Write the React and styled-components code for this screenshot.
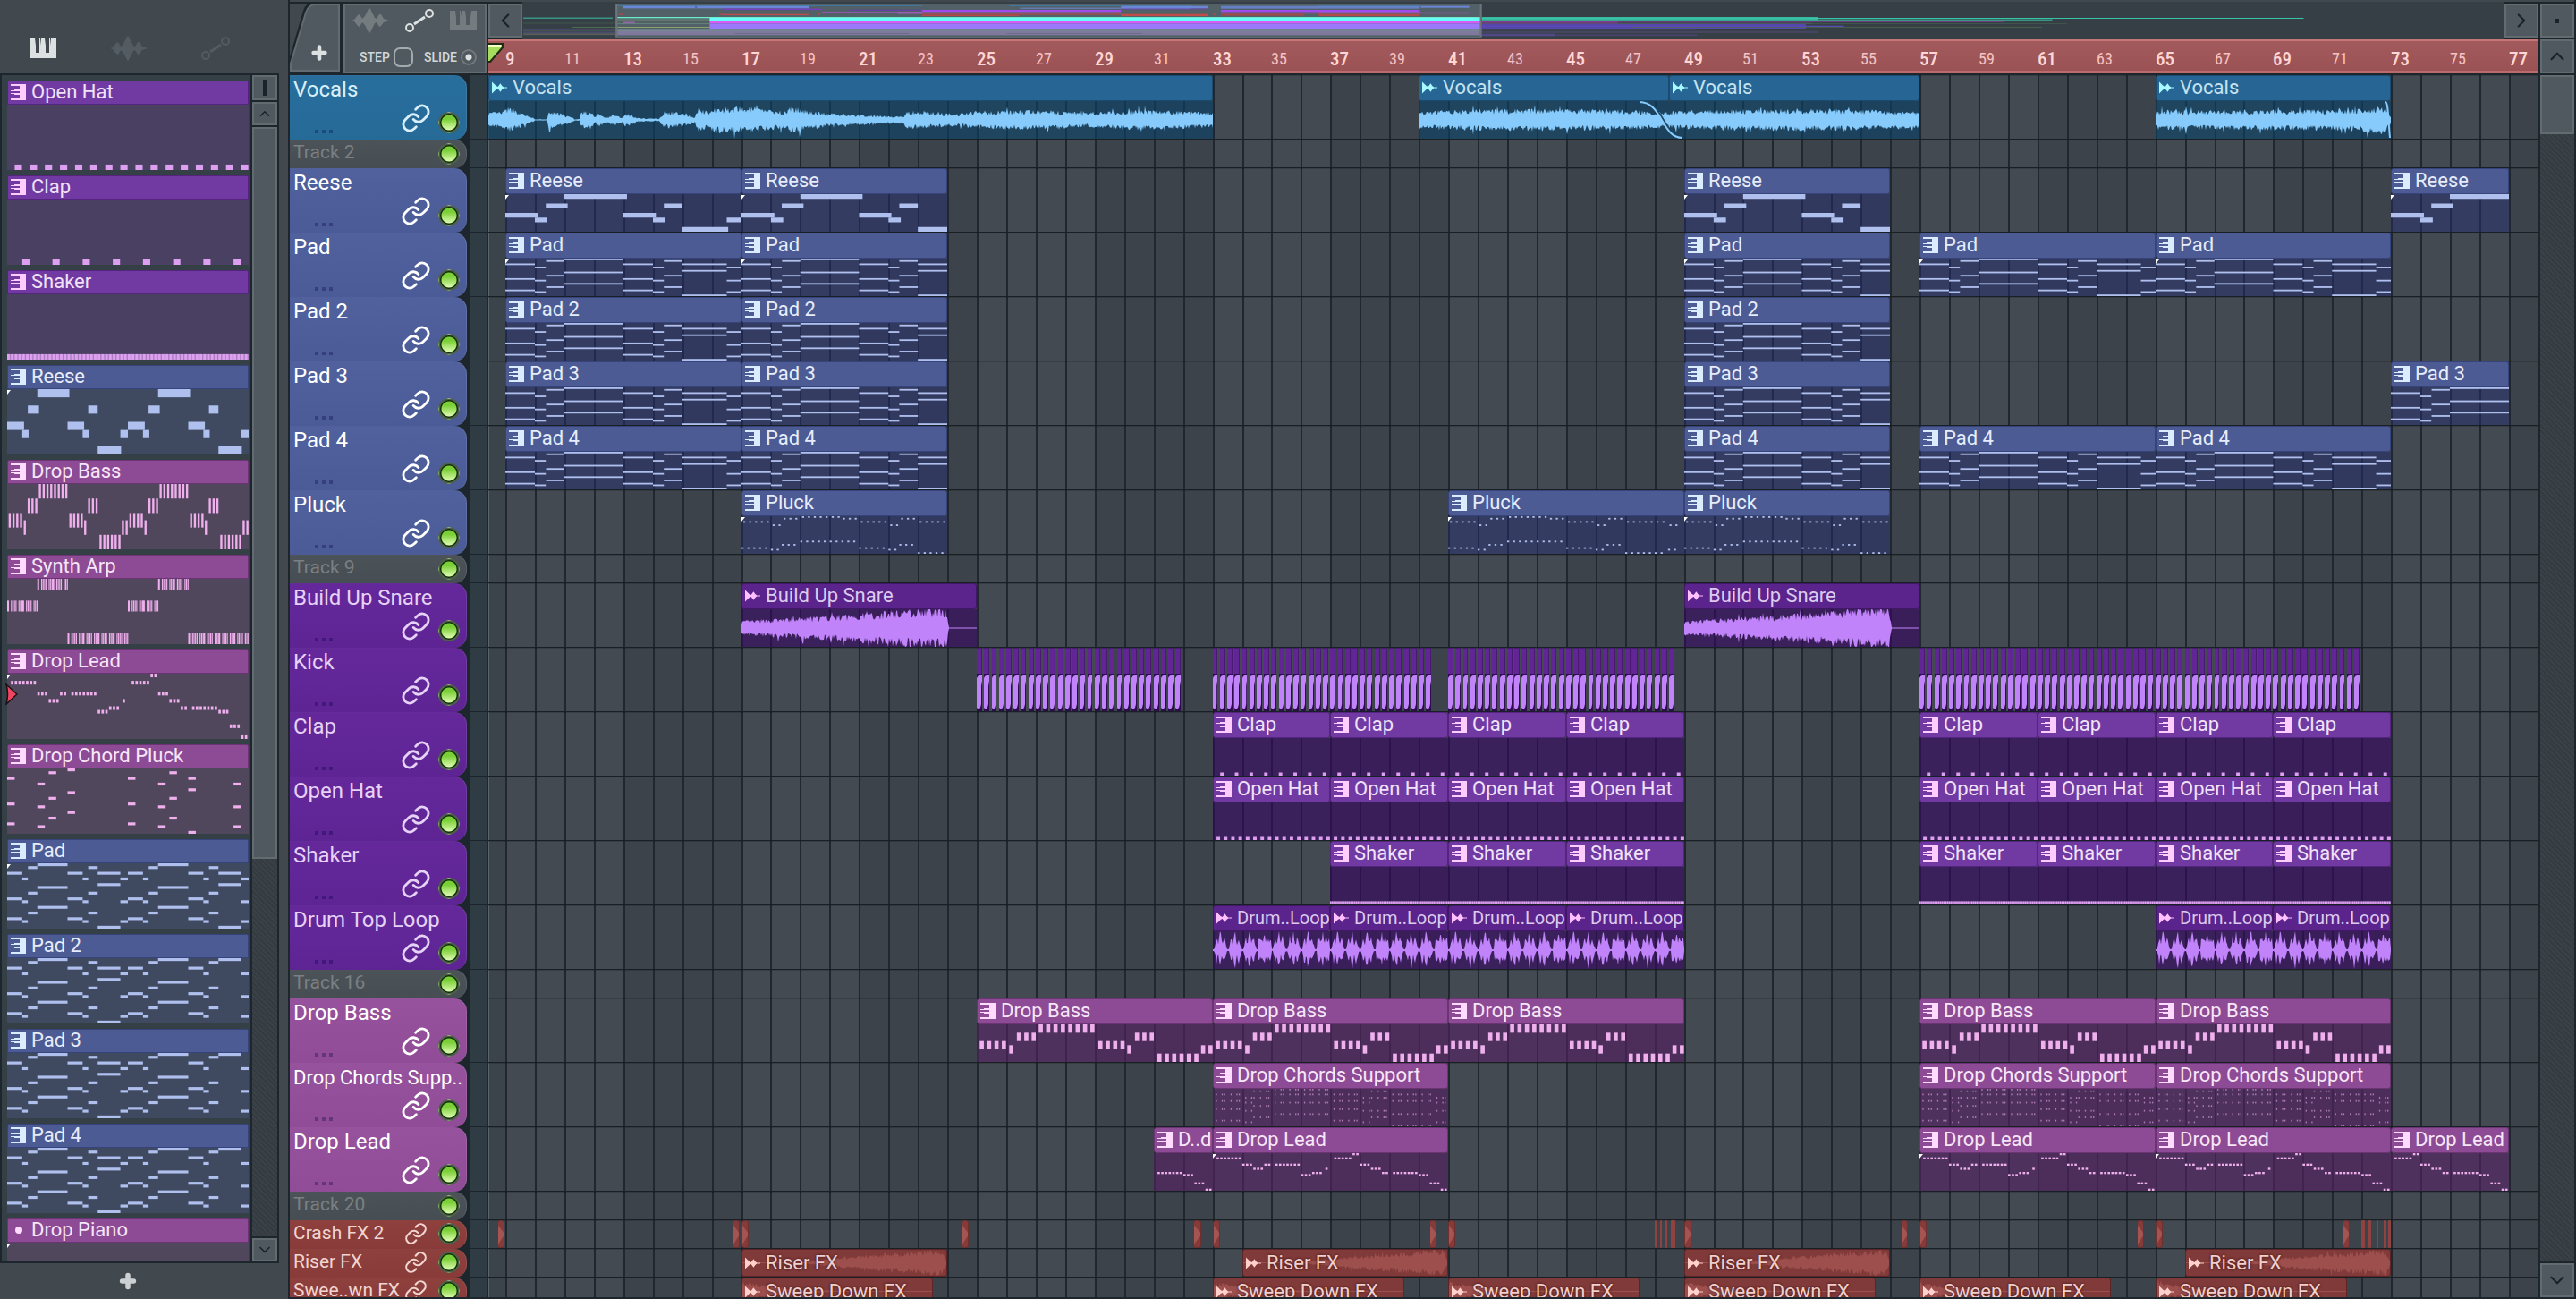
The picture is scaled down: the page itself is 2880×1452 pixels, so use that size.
import React from 'react'
import styled, { createGlobalStyle, css } from 'styled-components'
import { Link, Plus, ChevronUp, ChevronDown, ChevronLeft, ChevronRight } from 'lucide-react'

const BAR = 32.94
const FIRST_X = 19 // x of bar 9 inside the lanes
const barX = (bar) => Math.round(FIRST_X + (bar - 9) * BAR)

const TONES = {
    blue: { track: '#266a98', trackHi: '#286e9c', head: '#276694', edge: '#1a4c72', body: 'rgba(9,67,105,0.6)', note: '#86cbfc', text: '#c4e2f0', icon: '#a8f8ff', trackText: '#d9effa' },
    indigo: { track: '#4b5b98', trackHi: '#50619e', head: '#4d5b94', edge: '#37447c', body: 'rgba(36,47,118,0.45)', note: '#afbfee', text: '#e6ecfa', icon: '#dcecff', trackText: '#ffffff', cell: '#3f4a60' },
    violet: { track: '#5e2494', trackHi: '#64289a', head: '#5b248c', edge: '#431768', body: 'rgba(55,6,99,0.6)', note: '#c183fa', text: '#dccbee', icon: '#ffc0ff', trackText: '#e6d2f6' },
    purple: { head: '#713aa3', edge: '#54247f', body: 'rgba(55,6,99,0.6)', note: '#dd9ff0', text: '#f0e2f8', icon: '#ffccff', cell: '#4a4062' },
    pink: { track: '#904c97', trackHi: '#96529d', head: '#8d4b95', edge: '#6c3474', body: 'rgba(89,34,102,0.6)', note: '#f0b0ee', text: '#f6e6f8', icon: '#ffdcff', trackText: '#ffffff', cell: '#50475c' },
    red: { track: '#883b39', trackHi: '#8e403d', head: '#803a39', edge: '#5e2526', body: '#803a39', note: '#9c4f4d', text: '#f0cfcd', icon: '#ffd0cc', trackText: '#f2d4d0' },
    grey: { track: '#464e53', trackHi: '#4b5358', trackText: '#7a8083' },
}

/* ---------- patterns: [start, length, row] ---------- */

const repeat = (notes, shift) => [...notes, ...notes.map(([x, w, y]) => [x + shift, w, y])]
const ticks = (x, count, row, step, w) => Array.from({ length: count }, (_, i) => [x + i * step, w, row])
const dashes = (from, to, row) => ticks(from, Math.max(1, Math.round((to - from) / 0.25)), row, 0.25, 0.16)

const REESE = [[0, 1.12, 4], [1, 0.42, 5], [1.37, 0.74, 2], [2, 2.12, 0], [4, 1.1, 4], [5, 0.42, 5], [5.37, 0.63, 2], [6, 1.55, 7], [7.5, 0.5, 5]]

const PAD_BASE = [
    [0, 1, 3], [1, 0.37, 5], [1.38, 0.62, 1], [2, 2, 0], [4, 1, 3], [5, 0.37, 5], [5.37, 0.63, 1], [7.5, 0.5, 5],
    [0, 1, 12], [1, 0.37, 13], [1.38, 0.62, 10], [2, 2, 8], [4, 1, 12], [5, 0.37, 13], [5.37, 0.63, 10], [7.5, 0.5, 13],
    [0, 1, 19], [1, 0.37, 20], [1.38, 0.62, 17], [2, 2, 15], [4, 1, 19], [5, 0.37, 20], [5.37, 0.63, 17], [7.5, 0.5, 20],
]
const PAD_TAIL = [[6, 1.5, 3], [6, 1.5, 7], [6, 1.5, 22]]
const PAD = repeat([...PAD_BASE, ...PAD_TAIL], 8)
const PAD_ALT = [...repeat(PAD_BASE, 8), ...PAD_TAIL, [14, 1.5, 0]]

const dots = (x, n, row) => ticks(x, n, row, 0.2, 0.07)
const PLUCK = [
    ...dots(0.06, 5, 3), ...dots(1.06, 2, 5), ...dots(1.43, 3, 1), ...dots(2.06, 5, 0), ...dots(3.07, 2, 0), ...dots(3.45, 3, 1),
    ...dots(4.06, 5, 3), ...dots(5.06, 2, 5), ...dots(5.43, 3, 1), ...dots(6.06, 5, 3), ...dots(7.06, 2, 3), ...dots(7.5, 2, 5),
    ...dots(0, 5, 19), ...dots(1, 2, 20), ...dots(1.37, 3, 17), ...dots(2, 5, 15), ...dots(3, 5, 15),
    ...dots(4, 5, 19), ...dots(5, 2, 20), ...dots(5.37, 3, 17), ...dots(6, 5, 22), ...dots(7, 2, 22), ...dots(7.45, 2, 20),
]

const hit = (x, n, row) => ticks(x, n, row, 0.25, 0.14)
const BASS = repeat([
    ...hit(0.1, 4, 4), ...hit(1.1, 1, 5), ...hit(1.36, 3, 2), ...hit(2.1, 8, 0), ...hit(4.12, 4, 4),
    ...hit(5.1, 1, 5), ...hit(5.36, 3, 2), ...hit(6.12, 6, 7), ...hit(7.6, 2, 5),
], 8)

const arp = (from, bars, row) => {
    const out = []
    for (let b = from; b < from + bars; b++) {
        out.push([b, 0.12, row])
        out.push(...ticks(b + 0.25, 4, row, 0.1, 0.07), ...ticks(b + 0.75, 3, row, 0.1, 0.07))
    }
    return out
}
const ARP = [...arp(0, 2, 2), ...arp(2, 2, 0), ...arp(4, 4, 5), ...arp(8, 2, 2), ...arp(10, 2, 0), ...arp(12, 4, 5)]

const LEAD = [
    ...dashes(0.25, 2, 2), ...dashes(2, 2.75, 5), ...dashes(2.75, 3.5, 7), ...dashes(3.5, 4, 5), ...dashes(4.25, 6, 5),
    ...dashes(6, 6.75, 10), ...dashes(6.75, 7.5, 9), ...dashes(7.65, 8, 7), ...dashes(8.25, 9.5, 2), ...dashes(9.5, 10, 0),
    ...dashes(10, 10.75, 5), ...dashes(10.75, 11.5, 7), ...dashes(11.5, 12, 9), ...dashes(12.25, 14, 9),
    ...dashes(14, 14.75, 10), ...dashes(14.75, 15.5, 14), ...dashes(15.5, 16, 17),
]

const stack = (x, w, rows) => rows.map((r) => [x, w, r])
const CHORD_PLUCK = [
    ...stack(0, 0.5, [3, 12, 19]), ...stack(2, 0.5, [5, 13, 20]), ...stack(2.75, 0.5, [1, 10, 17]), ...stack(4, 0.5, [0, 8, 15]),
    ...stack(8, 0.5, [3, 12, 19]), ...stack(10, 0.5, [5, 13, 20]), ...stack(10.75, 0.5, [1, 10, 17]), ...stack(12, 0.5, [3, 7, 22]),
    ...stack(15, 0.5, [5, 13, 20]),
]

const STABS = [0.1, 0.3, 0.38, 0.6, 0.8, 0.88]
const stabs = (bar, rows, from = 0, to = 1) =>
    STABS.filter((s) => s >= from && s < to).flatMap((s) => stack(bar + s, 0.04, rows))
const SUPPORT = [
    ...stabs(0, [3, 7, 12, 19]), ...stabs(1, [5, 8, 13, 20], 0, 0.35), ...stabs(1, [1, 5, 10, 17], 0.35),
    ...stabs(2, [0, 3, 8, 15]), ...stabs(3, [0, 3, 8, 15]), ...stabs(4, [3, 7, 12, 19]),
    ...stabs(5, [5, 8, 13, 20], 0, 0.35), ...stabs(5, [1, 5, 13, 17], 0.35), ...stabs(6, [3, 7, 15, 22]),
    ...stabs(7, [3, 7, 15, 22], 0, 0.4), ...stabs(7, [5, 8, 13, 20], 0.4),
]

const PATTERNS = {
    openHat: { rows: 12, perBar: 4, notes: ticks(0.5, 16, 11, 1, 0.48) },
    clap: { rows: 12, perBar: 4, notes: ticks(1, 8, 11, 2, 0.48) },
    shaker: { rows: 12, perBar: 4, notes: [...ticks(0, 64, 11, 0.25, 0.17)], haze: true },
    reese: { rows: 8, perBar: 1, notes: repeat(REESE, 8) },
    bass: { rows: 9, perBar: 1, notes: BASS, tall: 2 },
    arp: { rows: 6, perBar: 1, notes: ARP },
    lead: { rows: 18, perBar: 2, notes: LEAD },
    chordPluck: { rows: 23, perBar: 1, notes: CHORD_PLUCK },
    pad: { rows: 23, perBar: 1, notes: PAD },
    padAlt: { rows: 23, perBar: 1, notes: PAD_ALT },
    pluck: { rows: 23, perBar: 1, notes: PLUCK },
    support: { rows: 23, perBar: 1, notes: SUPPORT, soft: true },
    empty: { rows: 1, perBar: 1, notes: [] },
}

function Notes({ pattern, units, offset = 0, color }) {
    const p = PATTERNS[pattern]
    return (
        <Fill viewBox={`${offset} 0 ${units} ${p.rows}`} preserveAspectRatio="none" aria-hidden="true">
            <g fill={color} opacity={p.soft ? 0.6 : 1}>
                {p.haze && <rect x="0" y={11} width="64" height="1" opacity="0.65" />}
                {p.notes.map(([x, w, y], i) => (
                    <rect key={i} x={x} y={y} width={w} height={p.tall || 1} />
                ))}
            </g>
        </Fill>
    )
}

/* ---------- wave forms ---------- */

const random = (seed) => {
    let s = seed
    return () => {
        s = (s * 16807) % 2147483647
        return s / 2147483647
    }
}

const level = (env, t) => {
    for (let i = 1; i < env.length; i++) {
        if (t <= env[i][0]) {
            const [x0, a0] = env[i - 1]
            const [x1, a1] = env[i]
            return a0 + ((a1 - a0) * (t - x0)) / (x1 - x0 || 1)
        }
    }
    return env[env.length - 1][1]
}

const VOCAL_INTRO = [
    [0, 0.36], [0.02, 0.42], [0.025, 0.6], [0.035, 0.58], [0.045, 0.34], [0.062, 0.1], [0.064, 0.03], [0.081, 0.03], [0.083, 0.42], [0.1, 0.32],
    [0.117, 0.1], [0.118, 0.04], [0.126, 0.04], [0.128, 0.48], [0.145, 0.3], [0.148, 0.12], [0.15, 0.36], [0.166, 0.12], [0.17, 0.25], [0.185, 0.15],
    [0.19, 0.36], [0.205, 0.1], [0.235, 0.06], [0.243, 0.44], [0.265, 0.36], [0.285, 0.15], [0.29, 0.6], [0.306, 0.36], [0.31, 0.62], [0.36, 0.62],
    [0.41, 0.42], [0.415, 0.66], [0.47, 0.32], [0.53, 0.22], [0.573, 0.18], [0.578, 0.46], [0.65, 0.3], [0.67, 0.44], [0.78, 0.48], [0.82, 0.34], [0.9, 0.5], [1, 0.38],
]
const VOCAL = [[0, 0.42], [0.2, 0.5], [0.5, 0.54], [0.8, 0.5], [1, 0.4]]
const VOCAL_FADE = [[0, 0.48], [0.3, 0.48], [0.85, 0.52], [0.97, 0.7], [1, 0.2]]
const BUILD = [[0, 0.36], [0.3, 0.55], [0.6, 0.8], [0.75, 0.98], [0.872, 1], [0.882, 0.02], [1, 0.02]]
const RISER = [[0, 0.02], [0.3, 0.05], [0.5, 0.4], [0.8, 0.75], [0.98, 1], [1, 0.2]]
const SWEEP = [[0, 0.7], [0.12, 0.4], [0.3, 0.1], [0.6, 0.02], [1, 0.02]]

function wavePath(env, width, height, seed) {
    const rnd = random(seed)
    const mid = height / 2
    const top = []
    const bottom = []
    for (let x = 0; x <= width; x++) {
        const a = level(env, x / width) * mid
        const up = Math.min(mid, Math.max(0.6, a * (0.56 + rnd() * 0.58) * (rnd() > 0.95 ? 1.35 : 1)))
        const down = Math.min(mid, Math.max(0.6, a * (0.56 + rnd() * 0.58) * (rnd() > 0.96 ? 1.45 : 1)))
        top.push(`${x},${(mid - up).toFixed(1)}`)
        bottom.unshift(`${x},${(mid + down).toFixed(1)}`)
    }
    return [...top, ...bottom].join(' ')
}

// eight drum hits for each four bars, the fourth and the last one longer
function drumPath(width, height) {
    const rnd = random(31)
    const mid = height / 2
    const top = []
    const bottom = []
    const step = width / 8
    for (let x = 0; x <= width; x++) {
        const n = Math.floor(x / step)
        const t = (x - n * step) / step
        const first = Math.max(0, 1.1 - Math.abs(t - 0.5) * 6)
        const second = Math.max(0, 0.72 - Math.abs(t - 0.76) * 3.2)
        const lead = Math.max(0, 0.75 - Math.abs(t - 0.26) * 4.5)
        let a = Math.max(first, second, lead, 0.06)
        if (n % 4 === 3) a = Math.max(a * 0.85, t > 0.1 ? 0.55 : 0)
        const up = Math.min(mid, a * mid * (0.7 + rnd() * 0.45))
        const down = Math.min(mid, a * mid * (0.65 + rnd() * 0.45))
        top.push(`${x},${(mid - up).toFixed(1)}`)
        bottom.unshift(`${x},${(mid + down).toFixed(1)}`)
    }
    return [...top, ...bottom].join(' ')
}

function Wave({ points, width, height, color }) {
    return (
        <Fill viewBox={`0 0 ${width} ${height}`} preserveAspectRatio="none" aria-hidden="true">
            <polygon points={points} fill={color} />
        </Fill>
    )
}

/* ---------- icons ---------- */

const PatternIcon = ({ color }) => (
    <svg width="17" height="18" viewBox="0 0 17 18" fill={color} shapeRendering="crispEdges" aria-hidden="true">
        <path d="M0 0H17V18H0V16H10V12H4V11H0V10H10V8H0V7H4V6H10V2H0Z" />
    </svg>
)

const AudioIcon = ({ color }) => (
    <svg width="17" height="14" viewBox="0 0 18 14" fill={color} aria-hidden="true">
        <path d="M0 0L5 5L7 6L10 2L12 5L14 6.4H18V7.6H14L12 9L10 12L7 8L5 9L0 14Z" />
    </svg>
)

const DotIcon = ({ color }) => (
    <svg width="17" height="18" viewBox="0 0 17 18" aria-hidden="true"><circle cx="9" cy="9" r="4" fill={color} /></svg>
)

const PianoIcon = ({ color }) => (
    <svg width="30" height="22" viewBox="0 0 30 22" aria-hidden="true">
        <path fill={color} d="M0 0H6L7 8V16H11V0H12L13 8V0H17L18 8V16H22V0H23L24 8V0H30V22H0Z" />
    </svg>
)

const WaveIcon = ({ color }) => (
    <svg width="42" height="28" viewBox="0 0 42 28" aria-hidden="true">
        <path fill={color} d="M0 14L3 13L7 8L9 7L12 12L15 9L18 3Q20 -3 22 3L26 11L28 12L31 7L33 7L36 12L42 14L36 16L33 20L31 21L28 16L26 17L22 25Q20 31 18 25L15 19L12 16L9 21L7 20L3 15Z" />
    </svg>
)

const NodesIcon = ({ color }) => (
    <svg width="32" height="26" viewBox="0 0 32 26" fill="none" stroke={color} strokeWidth="2" aria-hidden="true">
        <circle cx="5" cy="21" r="4" />
        <circle cx="27" cy="5" r="4" />
        <path d="M10 17L22 9" strokeWidth="3" />
    </svg>
)

/* ---------- picker ---------- */

const PICKER = [
    { name: 'Open Hat', tone: 'purple', pattern: 'openHat' },
    { name: 'Clap', tone: 'purple', pattern: 'clap' },
    { name: 'Shaker', tone: 'purple', pattern: 'shaker' },
    { name: 'Reese', tone: 'indigo', pattern: 'reese', mark: true },
    { name: 'Drop Bass', tone: 'pink', pattern: 'bass' },
    { name: 'Synth Arp', tone: 'pink', pattern: 'arp' },
    { name: 'Drop Lead', tone: 'pink', pattern: 'lead', mark: true, current: true },
    { name: 'Drop Chord Pluck', tone: 'pink', pattern: 'chordPluck' },
    { name: 'Pad', tone: 'indigo', pattern: 'pad', mark: true },
    { name: 'Pad 2', tone: 'indigo', pattern: 'padAlt' },
    { name: 'Pad 3', tone: 'indigo', pattern: 'padAlt' },
    { name: 'Pad 4', tone: 'indigo', pattern: 'padAlt' },
    { name: 'Drop Piano', tone: 'pink', pattern: 'empty', mark: true, dot: true },
]

function Picker() {
    return (
        <PickerPanel>
            <PickerTabs>
                <IconButton aria-label="Patterns"><PianoIcon color="#dde1e2" /></IconButton>
                <IconButton aria-label="Audio clips"><WaveIcon color="#525c62" /></IconButton>
                <IconButton aria-label="Automation clips"><NodesIcon color="#525c62" /></IconButton>
            </PickerTabs>
            <PickerMain>
                <PickerList>
                    {PICKER.map((item) => {
                        const tone = TONES[item.tone]
                        return (
                            <PickerItem key={item.name}>
                                <PickerTitle $tone={tone}>
                                    {item.dot ? <DotIcon color={tone.icon} /> : <PatternIcon color={tone.icon} />}
                                    <span>{item.name}</span>
                                </PickerTitle>
                                <PickerPreview $tone={tone}>
                                    <Notes pattern={item.pattern} units={16} color={tone.note} />
                                    {item.mark && <Mark />}
                                </PickerPreview>
                                {item.current && (
                                    <CurrentArrow viewBox="0 0 14 24" aria-hidden="true">
                                        <path d="M1 1L13 12L1 23Q4 12 1 1Z" fill="#ee4560" stroke="#1a1216" strokeWidth="1.5" />
                                    </CurrentArrow>
                                )}
                            </PickerItem>
                        )
                    })}
                </PickerList>
                <Scroll $width={28}>
                    <ScrollButton $h={28} aria-label="Picker size"><Tick /></ScrollButton>
                    <ScrollButton $h={26} aria-label="Scroll picker up"><ChevronUp size={18} /></ScrollButton>
                    <ScrollTrack>
                        <ScrollThumb $h="66%" />
                    </ScrollTrack>
                    <ScrollButton $h={26} aria-label="Scroll picker down"><ChevronDown size={20} /></ScrollButton>
                </Scroll>
            </PickerMain>
            <PickerFooter aria-label="Add pattern"><Plus size={22} strokeWidth={6} /></PickerFooter>
        </PickerPanel>
    )
}

/* ---------- tracks ---------- */

const four = (starts, name, tone, pattern) => starts.map((s) => ({ name, tone, pattern, from: s, to: s + 4 }))
const kicks = (from, count) =>
    Array.from({ length: count }, (_, i) => ({ kind: 'kick', tone: 'violet', from: from + i * 0.25, to: from + i * 0.25 + 0.18 }))
const audio = (name, tone, wave, spans) => spans.map(([from, to, extra]) => ({ name, tone, wave, from, to, ...extra }))
const midi = (name, tone, pattern, spans, mark) => spans.map(([from, to, extra]) => ({ name, tone, pattern, from, to, mark, ...extra }))

const CRASHES = [
    8.72, 16.7, 17, 24.47, 32.36, 33, 40.35, 41, [48, 0.08], [48.18, 0.08], [48.36, 0.08], [48.55, 0.16], 49, 56.35, 57, 64.37, 65, 71.35,
    [72, 0.11], [72.23, 0.09], [72.5, 0.07], [72.75, 0.1], [72.9, 0.1],
]

const TRACKS = [
    {
        name: 'Vocals', tone: 'blue', fades: true,
        clips: audio('Vocals', 'blue', VOCAL_INTRO, [[8.42, 33]]).concat(
            audio('Vocals', 'blue', VOCAL, [[40, 48.5], [48.5, 57]]),
            audio('Vocals', 'blue', VOCAL_FADE, [[65, 73]])
        ),
    },
    { name: 'Track 2', empty: true },
    { name: 'Reese', tone: 'indigo', clips: midi('Reese', 'indigo', 'reese', [[9, 17], [17, 24], [49, 56], [73, 77]], true) },
    { name: 'Pad', tone: 'indigo', clips: midi('Pad', 'indigo', 'pad', [[9, 17], [17, 24], [49, 56], [57, 65], [65, 73]], true) },
    { name: 'Pad 2', tone: 'indigo', clips: midi('Pad 2', 'indigo', 'padAlt', [[9, 17], [17, 24], [49, 56]]) },
    { name: 'Pad 3', tone: 'indigo', clips: midi('Pad 3', 'indigo', 'padAlt', [[9, 17], [17, 24], [49, 56], [73, 77]]) },
    { name: 'Pad 4', tone: 'indigo', clips: midi('Pad 4', 'indigo', 'padAlt', [[9, 17], [17, 24], [49, 56], [57, 65], [65, 73]]) },
    { name: 'Pluck', tone: 'indigo', clips: midi('Pluck', 'indigo', 'pluck', [[17, 24], [41, 49], [49, 56]], true) },
    { name: 'Track 9', empty: true },
    { name: 'Build Up Snare', tone: 'violet', clips: audio('Build Up Snare', 'violet', BUILD, [[17, 25], [49, 57]]) },
    { name: 'Kick', tone: 'violet', clips: [...kicks(25, 28), ...kicks(33, 30), ...kicks(41, 31), ...kicks(57, 60)] },
    { name: 'Clap', tone: 'violet', clips: four([33, 37, 41, 45, 57, 61, 65, 69], 'Clap', 'purple', 'clap') },
    { name: 'Open Hat', tone: 'violet', clips: four([33, 37, 41, 45, 57, 61, 65, 69], 'Open Hat', 'purple', 'openHat') },
    { name: 'Shaker', tone: 'violet', clips: four([37, 41, 45, 57, 61, 65, 69], 'Shaker', 'purple', 'shaker') },
    { name: 'Drum Top Loop', tone: 'violet', clips: audio('Drum..Loop', 'violet', 'drums', [33, 37, 41, 45, 65, 69].map((s) => [s, s + 4, { tight: true }])) },
    { name: 'Track 16', empty: true },
    { name: 'Drop Bass', tone: 'pink', clips: midi('Drop Bass', 'pink', 'bass', [[25, 33], [33, 41], [41, 49], [57, 65], [65, 73]]) },
    { name: 'Drop Chords Supp..', tone: 'pink', tight: true, clips: midi('Drop Chords Support', 'pink', 'support', [[33, 41], [57, 65], [65, 73]]) },
    {
        name: 'Drop Lead', tone: 'pink',
        clips: midi('D..d', 'pink', 'lead', [[31, 33, { offset: 12 }]]).concat(
            midi('Drop Lead', 'pink', 'lead', [[33, 41], [57, 65], [65, 73]], true),
            midi('Drop Lead', 'pink', 'lead', [[73, 77, { offset: 8 }]])
        ),
    },
    { name: 'Track 20', empty: true },
    { name: 'Crash FX 2', tone: 'red', short: true, clips: CRASHES.map((c) => (Array.isArray(c) ? { kind: 'crash', thin: true, from: c[0], to: c[0] + c[1] } : { kind: 'crash', from: c, to: c + 0.25 })) },
    { name: 'Riser FX', tone: 'red', short: true, clips: audio('Riser FX', 'red', RISER, [[17, 24], [34, 41], [49, 56], [66, 73]]) },
    { name: 'Swee..wn FX', tone: 'red', short: true, clips: audio('Sweep Down FX', 'red', SWEEP, [[17, 23.5], [33, 39.5], [41, 47.5], [49, 55.5], [57, 63.5], [65, 71.5]]) },
]

const isShort = (track) => Boolean(track.empty || track.short)

function TrackHeader({ track }) {
    const tone = TONES[track.empty ? 'grey' : track.tone]
    const short = isShort(track)
    return (
        <TrackHead $tone={tone} $short={short}>
            <TrackName $short={short} $tight={track.tight} $tone={tone}>{track.name}</TrackName>
            {!short && <Grip><i /><i /><i /></Grip>}
            <TrackTools $short={short}>
                {!track.empty && (
                    <IconButton aria-label={`Link ${track.name}`}>
                        <Link size={short ? 26 : 34} strokeWidth={2} color={tone.trackText} />
                    </IconButton>
                )}
                <Led type="checkbox" defaultChecked aria-label={`${track.name} on`} />
            </TrackTools>
        </TrackHead>
    )
}

function Clip({ clip, short, index }) {
    const left = barX(clip.from)
    const width = barX(clip.to) - left
    const place = { left, width }

    if (clip.kind === 'kick') {
        return (
            <KickClip style={place}>
                <KickTop />
                <KickBody>
                    <Fill viewBox="0 0 6 42" preserveAspectRatio="none" aria-hidden="true">
                        <path d="M0 5Q1 2 3 2H6V8L5 14V34L4 38L2 40L0 38Z" fill="#c183fa" />
                    </Fill>
                </KickBody>
            </KickClip>
        )
    }
    if (clip.kind === 'crash') {
        return (
            <CrashClip style={place} $thin={clip.thin}>
                {!clip.thin && (
                    <Fill viewBox="0 0 8 30" preserveAspectRatio="none" aria-hidden="true">
                        <path d="M0 5L3 8L8 13V17L3 23L0 27Z" fill="#a65452" />
                    </Fill>
                )}
            </CrashClip>
        )
    }

    const tone = TONES[clip.tone]
    const title = (
        <ClipTitle $tone={tone} $short={short} $tight={clip.tight}>
            {clip.pattern ? <PatternIcon color={tone.icon} /> : <AudioIcon color={tone.icon} />}
            <span>{clip.name}</span>
        </ClipTitle>
    )

    if (short) {
        return (
            <ShortClip style={place} $tone={tone}>
                <ShortWave>
                    <Wave points={wavePath(clip.wave, width, 30, index + 11)} width={width} height={30} color={tone.note} />
                </ShortWave>
                {title}
            </ShortClip>
        )
    }

    const perBar = clip.pattern ? PATTERNS[clip.pattern].perBar : 1
    return (
        <ClipBox style={place}>
            {title}
            <ClipBody $tone={tone}>
                {clip.pattern ? (
                    <Notes pattern={clip.pattern} units={(clip.to - clip.from) * perBar} offset={clip.offset} color={tone.note} />
                ) : (
                    <Wave
                        points={clip.wave === 'drums' ? drumPath(width, 42) : wavePath(clip.wave, width, 42, index * 97 + 7)}
                        width={width}
                        height={42}
                        color={tone.note}
                    />
                )}
                {clip.mark && <Mark />}
            </ClipBody>
        </ClipBox>
    )
}

function TrackRow({ track }) {
    const short = isShort(track)
    return (
        <Row $short={short}>
            {(track.clips || []).map((clip, i) => (
                <Clip key={i} clip={clip} short={short} index={i} />
            ))}
            {track.fades && (
                <>
                    <Fade style={{ left: barX(47.5), width: 48 }} viewBox="0 0 48 42" preserveAspectRatio="none">
                        <path d="M2 1C28 1 26 41 50 41" stroke="#1d4763" />
                        <path d="M0 1C26 1 24 41 48 41" />
                    </Fade>
                    <Fade style={{ left: barX(73) - 6, width: 6 }} viewBox="0 0 6 42" preserveAspectRatio="none">
                        <path d="M0 1C3 1 3 20 5 41" />
                    </Fade>
                </>
            )}
        </Row>
    )
}

/* ---------- overview strip above the ruler: [x, y, w, h, colour] ---------- */

const OVERVIEW_BACK = [
    [42, 59, 92, 3, '#37c4a4'], [42, 69, 92, 2, '#6b7a45'], [42, 77, 100, 2, '#43604b'], [92, 90, 45, 3, '#4b6f4b'], [42, 96, 95, 2, '#53487a'],
    [42, 102, 95, 2, '#43604b'], [42, 106, 95, 12, '#4a4a6a'], [42, 113, 95, 3, '#5f6a45'],
    [1030, 57, 346, 10, '#38b79c'], [1030, 60, 847, 3, '#38c4a6'], [1030, 65, 588, 3, '#38c4a6'],
    [1030, 70, 140, 7, '#8a3b96'], [1030, 71, 539, 3, '#8a3b96'], [1030, 77, 340, 4, '#604a7a'], [1170, 78, 463, 2, '#43604b'],
    [1030, 81, 334, 15, '#5546ac'], [1030, 86, 373, 4, '#5a49b4'], [1184, 90, 423, 2, '#4b6f4b'],
    [1030, 98, 220, 4, '#4a4a6a'], [1250, 99, 357, 2, '#4b6f4b'], [1030, 104, 346, 7, '#46455f'], [1030, 113, 76, 8, '#524888'], [1106, 116, 146, 3, '#524888'],
]
const OVERVIEW_FRONT = [
    [139, 18, 314, 2, '#3b82b5'], [543, 18, 187, 2, '#3b82b5'], [862, 18, 105, 2, '#3b82b5'],
    [145, 20, 192, 8, '#6c86d6'], [219, 20, 2, 8, '#5268a8'], [554, 26, 176, 3, '#6c86d6'], [658, 20, 90, 8, '#6c86d6'], [761, 20, 205, 9, '#6580c4'], [967, 20, 50, 6, '#6c86d6'],
    [247, 29, 103, 4, '#7a3cc8'], [378, 32, 74, 4, '#6244a0'], [453, 33, 205, 6, '#a04af0'], [761, 33, 205, 7, '#a04af0'], [658, 29, 88, 2, '#7a3cc8'],
    [350, 39, 103, 6, '#9058ac'], [428, 41, 230, 5, '#c060d8'], [761, 41, 256, 5, '#9058ac'], [862, 41, 105, 4, '#c060d8'],
    [247, 47, 90, 4, '#c04c4a'], [453, 46, 200, 4, '#a44a4a'], [453, 50, 100, 4, '#b34a4a'], [658, 47, 90, 7, '#c04c4a'], [761, 46, 86, 7, '#9c4a4c'], [862, 47, 104, 7, '#b34a4a'],
    [141, 45, 3, 6, '#a44a4a'], [244, 45, 3, 6, '#a44a4a'], [345, 45, 3, 6, '#a44a4a'], [653, 45, 3, 6, '#a44a4a'], [753, 45, 3, 6, '#a44a4a'], [861, 45, 3, 6, '#a44a4a'],
    [139, 57, 889, 3, '#6fe8cc'], [139, 61, 95, 3, '#5aa894'], [139, 68, 95, 3, '#8ba06c'], [145, 74, 12, 3, '#c060d8'], [139, 79, 95, 2, '#6d9480'], [139, 90, 95, 3, '#8ba06c'],
    [234, 60, 794, 11, '#66fcf8'], [234, 71, 794, 8, '#d75cf4'], [234, 79, 794, 18, '#9c78fc'],
    [139, 97, 889, 8, '#72908f'], [139, 104, 889, 14, '#80799e'], [260, 111, 180, 2, '#66667c'], [540, 111, 140, 2, '#66667c'],
]

function Overview() {
    return (
        <OverviewStrip>
            <ArrowButton aria-label="Scroll left"><ChevronLeft size={26} /></ArrowButton>
            <OverviewMap>
                <Fill viewBox="41 6 2043 126" preserveAspectRatio="none" aria-hidden="true">
                    {OVERVIEW_BACK.map(([x, y, w, h, c], i) => <rect key={i} x={x} y={y} width={w} height={h} fill={c} />)}
                    <rect x="138" y="14" width="891" height="110" fill="#526067" stroke="#6b757a" strokeWidth="2" />
                    {OVERVIEW_FRONT.map(([x, y, w, h, c], i) => <rect key={i} x={x} y={y} width={w} height={h} fill={c} />)}
                </Fill>
            </OverviewMap>
            <ArrowButton aria-label="Scroll right"><ChevronRight size={26} /></ArrowButton>
        </OverviewStrip>
    )
}

const BARS = Array.from({ length: 70 }, (_, i) => i + 9)

function Ruler() {
    return (
        <RulerBar>
            <Playhead viewBox="0 0 17 22" aria-hidden="true">
                <path d="M-1 1H16V5L2 21H-1Z" fill="#a6dc5c" stroke="#1f2a12" strokeWidth="2" />
                <path d="M0 3H14" stroke="#f4ffc8" strokeWidth="2" />
            </Playhead>
            <RulerPad />
            {BARS.map((n) => (
                <RulerCell key={n} $major={n % 4 === 1} style={{ width: barX(n + 1) - barX(n) }}>
                    {n % 2 === 1 && n <= 77 ? n : ''}
                </RulerCell>
            ))}
        </RulerBar>
    )
}

function Playlist() {
    return (
        <PlaylistPanel>
            <TopBar>
                <Tools>
                    <AddTab aria-label="Add track">
                        <TabShape viewBox="0 0 60 80" preserveAspectRatio="none" aria-hidden="true">
                            <path d="M0 80V68L17 10Q20 0 30 0H60V80Z" fill="#1c262c" />
                            <path d="M3 77V69L20 12Q23 3 31 3H57V77Z" fill="#50595f" stroke="#626b70" strokeWidth="2" />
                        </TabShape>
                        <PlusMark><Plus size={22} strokeWidth={5} /></PlusMark>
                    </AddTab>
                    <ToolBox>
                        <ToolRow>
                            <IconButton aria-label="Audio"><WaveIcon color="#747c80" /></IconButton>
                            <IconButton aria-label="Automation"><NodesIcon color="#dde1e2" /></IconButton>
                            <IconButton aria-label="Piano roll"><PianoIcon color="#747c80" /></IconButton>
                        </ToolRow>
                        <SnapRow>
                            <SnapLabel>STEP<StepBox type="checkbox" /></SnapLabel>
                            <SnapLabel>SLIDE<SlideDot type="radio" defaultChecked /></SnapLabel>
                        </SnapRow>
                    </ToolBox>
                </Tools>
                <Timeline>
                    <Overview />
                    <Ruler />
                </Timeline>
                <CornerButtons>
                    <ScrollButton $h={38} aria-label="Options"><Speck /></ScrollButton>
                    <ScrollButton $h={38} aria-label="Scroll tracks up"><ChevronUp size={26} /></ScrollButton>
                </CornerButtons>
            </TopBar>
            <Main>
                <Heads>
                    {TRACKS.map((t) => <TrackHeader key={t.name} track={t} />)}
                </Heads>
                <Gutter>
                    {TRACKS.map((t) => <GutterCell key={t.name} $short={isShort(t)} />)}
                </Gutter>
                <Lanes>
                    <Columns>
                        <ColumnPad />
                        {BARS.map((n) => (
                            <Column key={n} $light={Math.floor((n - 9) / 4) % 2 === 0} style={{ width: barX(n + 1) - barX(n) }} />
                        ))}
                    </Columns>
                    {TRACKS.map((t) => <TrackRow key={t.name} track={t} />)}
                </Lanes>
                <Scroll $width={38}>
                    <ScrollTrack>
                        <ScrollThumb $h="66px" />
                    </ScrollTrack>
                    <ScrollButton $h={38} aria-label="Scroll tracks down"><ChevronDown size={26} /></ScrollButton>
                </Scroll>
            </Main>
        </PlaylistPanel>
    )
}

function App() {
    return (
        <Shell>
            <Global />
            <Picker />
            <Playlist />
        </Shell>
    )
}

export default App

const Global = createGlobalStyle`
    * { box-sizing: border-box; }
    body {
        margin: 0;
        background: #1c262c;
        font-family: Roboto, "Liberation Sans", sans-serif;
        overflow: hidden;
    }
    button {
        font: inherit;
        padding: 0;
        border: 0;
        background: none;
        color: inherit;
    }
    input { appearance: none; margin: 0; }
`

const Fill = styled.svg`
    display: block;
    width: 100%;
    height: 100%;
`

const Shell = styled.div`
    display: flex;
    width: 100%;
    height: 100vh;
    overflow: hidden;
    background: #1c262c;
`

const IconButton = styled.button`
    display: flex;
    align-items: center;
    justify-content: center;
`

/* picker */

const PickerPanel = styled.aside`
    width: 322px;
    flex: none;
    display: flex;
    flex-direction: column;
    background: #41494f;
`

const PickerTabs = styled.div`
    height: 82px;
    flex: none;
    display: flex;
    align-items: center;
    gap: 60px;
    padding: 26px 0 0 33px;
`

const PickerMain = styled.div`
    flex: 1;
    min-height: 0;
    display: flex;
    width: 312px;
    gap: 2px;
    padding: 2px;
    background: #1c262c;
`

const PickerList = styled.div`
    flex: 1;
    overflow: hidden;
    display: flex;
    flex-direction: column;
    gap: 6px;
    padding: 6px 2px 0 6px;
    background: #343f46;
`

const PickerItem = styled.div`
    position: relative;
    height: 100px;
    flex: none;
`

const PickerTitle = styled.div`
    display: flex;
    align-items: center;
    gap: 6px;
    height: 27px;
    padding: 0 3px 2px;
    font-size: 22px;
    line-height: 24px;
    color: ${props => props.$tone.text};
    background: ${props => props.$tone.head};
    border: 1px solid ${props => props.$tone.edge};
    border-radius: 2px 2px 0 0;
`

const PickerPreview = styled.div`
    position: relative;
    height: 73px;
    background: ${props => props.$tone.cell};
`

const Mark = styled.i`
    position: absolute;
    left: 0;
    top: 1px;
    width: 4px;
    height: 5px;
    background: #fff;
    clip-path: polygon(0 0, 100% 0, 0 100%);
`

const CurrentArrow = styled.svg`
    position: absolute;
    left: -2px;
    top: 38px;
    width: 14px;
    height: 24px;
`

const PickerFooter = styled.button`
    height: 40px;
    width: 286px;
    flex: none;
    display: flex;
    align-items: center;
    justify-content: center;
    color: #ccd0d2;
`

/* scroll bars */

const Scroll = styled.div`
    width: ${props => props.$width}px;
    flex: none;
    display: flex;
    flex-direction: column;
    gap: 2px;
`

const raised = css`
    background: #50595f;
    border: 2px solid #626b70;
`

const ScrollButton = styled.button`
    ${raised}
    height: ${props => props.$h}px;
    width: 100%;
    flex: none;
    display: flex;
    align-items: center;
    justify-content: center;
    color: #1b2328;
`

const ScrollTrack = styled.div`
    flex: 1;
    background: repeating-linear-gradient(45deg, #343c42 0 2px, #3a4248 2px 4px);
`

const ScrollThumb = styled.div`
    ${raised}
    height: ${props => props.$h};
`

const Tick = styled.i`
    width: 4px;
    height: 18px;
    background: #1b2328;
`

const Speck = styled.i`
    width: 4px;
    height: 5px;
    background: #1b2328;
`

/* playlist top */

const PlaylistPanel = styled.main`
    flex: 1;
    min-width: 0;
    display: flex;
    flex-direction: column;
    padding: 0 2px 2px 2px;
`

const TopBar = styled.header`
    display: flex;
    height: 84px;
    flex: none;
    gap: 2px;
    padding: 4px 0 2px;
    background: linear-gradient(#41494f 0 2px, #1c262c 2px);
`

const Tools = styled.div`
    display: flex;
    width: 220px;
    flex: none;
    gap: 2px;
`

const AddTab = styled.button`
    position: relative;
    width: 58px;
    background: linear-gradient(90deg, #41494f 0 40px, #1c262c 40px);
`

const TabShape = styled.svg`
    position: absolute;
    left: -2px;
    top: -2px;
    width: 60px;
    height: 80px;
`

const PlusMark = styled.span`
    position: relative;
    display: flex;
    justify-content: center;
    padding: 32px 0 0 8px;
    color: #dde1e2;
`

const ToolBox = styled.div`
    ${raised}
    flex: 1;
    display: flex;
    flex-direction: column;
    padding: 3px 9px 0 7px;
`

const ToolRow = styled.div`
    display: flex;
    align-items: center;
    justify-content: space-between;
    height: 28px;
    flex: none;
`

const SnapRow = styled.div`
    display: flex;
    flex: 1;
    align-items: flex-end;
    justify-content: space-between;
    padding: 0 0 4px 9px;
`

const SnapLabel = styled.label`
    display: flex;
    align-items: center;
    gap: 4px;
    height: 24px;
    font-size: 14px;
    font-weight: 500;
    color: #d3d8da;
`

const StepBox = styled.input`
    width: 22px;
    height: 22px;
    border: 2px solid #a4abae;
    border-radius: 7px;
`

const SlideDot = styled.input`
    width: 18px;
    height: 18px;
    border: 2px solid #727a7e;
    border-radius: 50%;
    background: radial-gradient(circle, #dde1e2 0 3px, transparent 4px);
`

const Timeline = styled.div`
    flex: 1;
    min-width: 0;
    display: flex;
    flex-direction: column;
    gap: 2px;
`

const OverviewStrip = styled.div`
    display: flex;
    height: 38px;
    flex: none;
`

const ArrowButton = styled.button`
    ${raised}
    width: 38px;
    flex: none;
    display: flex;
    align-items: center;
    justify-content: center;
    color: #1b2328;
`

const OverviewMap = styled.div`
    flex: 1;
    height: 42px;
    margin-top: -2px;
    background: #373f46;
`

const RulerBar = styled.div`
    position: relative;
    display: flex;
    height: 38px;
    overflow: hidden;
    background: linear-gradient(#a25a5c, #9a5254);
    border-top: 2px solid #c77676;
    border-bottom: 3px solid #bb6b6c;
`

const Playhead = styled.svg`
    position: absolute;
    left: 0;
    top: 2px;
    width: 17px;
    height: 22px;
`

const RulerPad = styled.div`
    width: ${FIRST_X}px;
    flex: none;
`

const RulerCell = styled.div`
    flex: none;
    padding-top: 8px;
    line-height: 24px;
    white-space: nowrap;
    color: ${props => (props.$major ? '#ffd6d6' : '#f7c4c4')};
    font-family: "Roboto Condensed", "Liberation Sans Narrow", Roboto, sans-serif;
    font-size: ${props => (props.$major ? 21 : 18)}px;
    font-weight: ${props => (props.$major ? 500 : 400)};
`

const CornerButtons = styled.div`
    width: 38px;
    flex: none;
    display: flex;
    flex-direction: column;
    gap: 2px;
`

/* tracks */

const Main = styled.div`
    flex: 1;
    min-height: 0;
    display: flex;
    overflow: hidden;
`

const Heads = styled.div`
    width: 201px;
    flex: none;
    padding-right: 3px;
`

const rowHeight = css`
    height: ${props => (props.$short ? 32 : 72)}px;
`

const TrackHead = styled.div`
    ${rowHeight}
    position: relative;
    display: flex;
    flex-direction: column;
    justify-content: space-between;
    padding: ${props => (props.$short ? 0 : 2)}px 9px 0 4px;
    background: linear-gradient(${props => props.$tone.trackHi}, ${props => props.$tone.track});
    border-right: 1px solid rgba(255, 255, 255, 0.1);
    border-top: 1px solid rgba(255, 255, 255, 0.04);
    border-radius: 0 14px 14px 0;
`

const TrackName = styled.span`
    font-size: ${props => (props.$short ? 21 : props.$tight ? 22 : 24)}px;
    line-height: 27px;
    white-space: nowrap;
    color: ${props => props.$tone.trackText};
`

const Grip = styled.div`
    display: flex;
    gap: 4px;
    padding: 0 0 7px 24px;
    i {
        width: 4px;
        height: 4px;
        background: rgba(0, 0, 60, 0.3);
    }
`

const TrackTools = styled.div`
    position: absolute;
    right: 7px;
    bottom: ${props => (props.$short ? 4 : 7)}px;
    display: flex;
    align-items: ${props => (props.$short ? 'center' : 'flex-end')};
    gap: ${props => (props.$short ? 12 : 8)}px;
`

const Led = styled.input`
    width: 24px;
    height: 24px;
    border: 2px solid rgba(255, 255, 255, 0.26);
    border-radius: 50%;
    background: radial-gradient(circle, transparent 0 8px, #0e2a08 9px), linear-gradient(#79cf35 30%, #dcfaae 90%);
`

const Gutter = styled.div`
    width: 19px;
    flex: none;
    background: #303c43;
    margin-right: 2px;
`

const GutterCell = styled.div`
    ${rowHeight}
    border-bottom: 1px solid #1a242a;
`

const Lanes = styled.div`
    position: relative;
    isolation: isolate;
    flex: 1;
    min-width: 0;
    overflow: hidden;
    margin-right: 2px;
`

const Columns = styled.div`
    position: absolute;
    inset: 0;
    display: flex;
    overflow: hidden;
    z-index: -1;
`

const ColumnPad = styled.div`
    width: ${FIRST_X}px;
    flex: none;
    background: #3c444b;
    border-left: 1px solid #5a646a;
`

const Column = styled.div`
    flex: none;
    border-left: 2px solid #20272e;
    background: ${props => (props.$light ? '#434a51' : '#3c434b')};
`

const Row = styled.div`
    ${rowHeight}
    position: relative;
    box-shadow: inset 0 -1px #181f25, inset 0 1px rgba(0, 0, 0, 0.16);
`

const ClipBox = styled.div`
    position: absolute;
    top: 0;
    height: 71px;
    overflow: hidden;
    display: flex;
    flex-direction: column;
`

const ClipTitle = styled.div`
    display: flex;
    align-items: center;
    gap: 6px;
    height: ${props => (props.$short ? 31 : 29)}px;
    flex: none;
    padding: 0 0 2px 3px;
    font-size: ${props => (props.$tight ? 20 : 22)}px;
    line-height: 26px;
    white-space: nowrap;
    color: ${props => props.$tone.text};
    svg {
        flex: none;
    }
    ${props => props.$short ? css`
        position: relative;
        text-shadow: 0 0 3px rgba(30, 0, 0, 0.8);
    ` : css`
        background: ${props.$tone.head};
        border: 1px solid ${props.$tone.edge};
        border-radius: 3px;
    `}
`

const ClipBody = styled.div`
    position: relative;
    flex: 1;
    min-height: 0;
    background: ${props => props.$tone.body};
`

const ShortClip = styled.div`
    position: absolute;
    top: 0;
    height: 31px;
    overflow: hidden;
    background: ${props => props.$tone.head};
    border: 1px solid ${props => props.$tone.edge};
    border-radius: 3px;
`

const ShortWave = styled.div`
    position: absolute;
    inset: 0;
`

const KickClip = styled.div`
    position: absolute;
    top: 0;
    height: 71px;
`

const KickTop = styled.div`
    height: 29px;
    background: #622596;
    border: solid #481a70;
    border-width: 1px 1px 0 0;
`

const KickBody = styled.div`
    height: 42px;
    background: rgba(45, 6, 80, 0.9);
`

const CrashClip = styled.div`
    position: absolute;
    top: 0;
    height: 31px;
    overflow: hidden;
    background: ${props => (props.$thin ? '#8f4341' : '#843b3a')};
    border: ${props => (props.$thin ? 0 : 1)}px solid #6e2f2f;
    border-radius: ${props => (props.$thin ? 1 : 3)}px;
`

const Fade = styled.svg`
    position: absolute;
    top: 29px;
    height: 42px;
    fill: none;
    stroke: #86cbfc;
    stroke-width: 2;
`
